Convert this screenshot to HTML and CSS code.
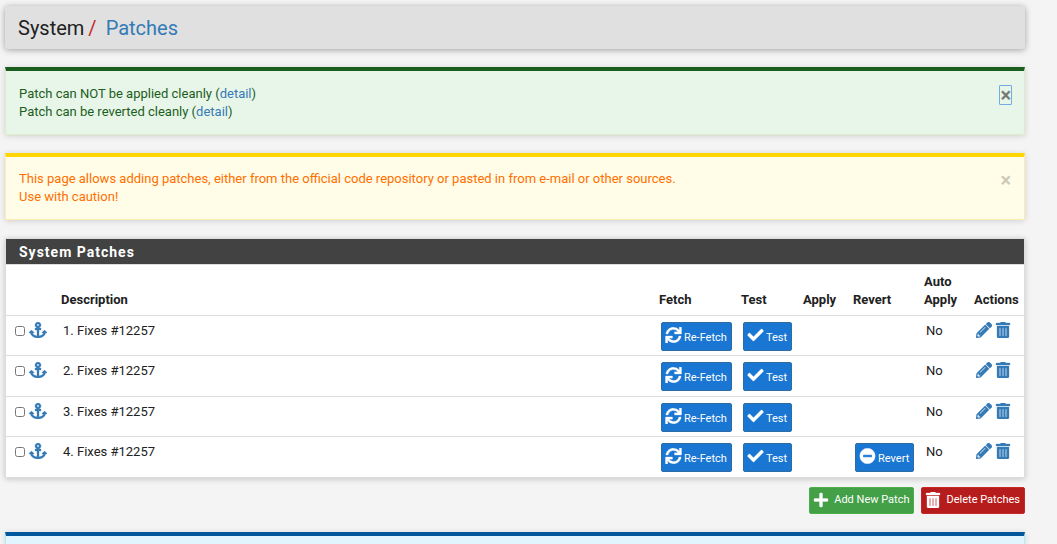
FILE: index.html
```
<!DOCTYPE html>
<html lang="en">
<head>
<meta charset="utf-8">
<title>System / Patches</title>
<link rel="stylesheet" href="styles.css">
</head>
<body>
<svg class="sprite" aria-hidden="true">
  <symbol id="anchor" viewBox="0 0 576 512"><path d="M12.971 352h32.394C67.172 454.735 181.944 512 288 512c106.229 0 220.853-57.38 242.635-160h32.394c10.691 0 16.045-12.926 8.485-20.485l-67.029-67.029c-4.686-4.686-12.284-4.686-16.971 0l-67.029 67.029c-7.56 7.56-2.206 20.485 8.485 20.485h35.146c-20.29 54.317-84.963 86.588-144.117 94.015V256h52c6.627 0 12-5.373 12-12v-40c0-6.627-5.373-12-12-12h-52v-5.47c37.281-13.226 64-48.793 64-90.53C384 43.05 341.057.09 288.155 0 234.964-.09 192 42.98 192 96c0 41.737 26.718 77.304 64 90.53V192h-52c-6.627 0-12 5.373-12 12v40c0 6.627 5.373 12 12 12h52v190.015c-58.936-7.399-123.82-39.679-144.117-94.015h35.146c10.691 0 16.046-12.926 8.485-20.485l-67.029-67.029c-4.686-4.686-12.284-4.686-16.971 0L4.485 331.515C-3.074 339.074 2.28 352 12.971 352zM288 64c17.645 0 32 14.355 32 32s-14.355 32-32 32-32-14.355-32-32 14.355-32 32-32z"/></symbol>
  <symbol id="sync" viewBox="0 0 512 512"><path d="M440.65 12.57l4 82.77A247.16 247.16 0 0 0 255.83 8C134.73 8 33.91 94.92 12.29 209.82A12 12 0 0 0 24.09 224h49.05a12 12 0 0 0 11.67-9.26 175.91 175.91 0 0 1 317-56.94l-101.46-4.86a12 12 0 0 0-12.57 12v47.41a12 12 0 0 0 12 12H500a12 12 0 0 0 12-12V12a12 12 0 0 0-12-12h-47.37a12 12 0 0 0-11.98 12.57zM255.83 432a175.61 175.61 0 0 1-146-77.8l101.8 4.87a12 12 0 0 0 12.57-12v-47.4a12 12 0 0 0-12-12H12a12 12 0 0 0-12 12V500a12 12 0 0 0 12 12h47.35a12 12 0 0 0 12-12.6l-4.15-82.57A247.17 247.17 0 0 0 255.83 504c121.11 0 221.93-86.92 243.55-201.82a12 12 0 0 0-11.8-14.18h-49.05a12 12 0 0 0-11.67 9.26A175.86 175.86 0 0 1 255.83 432z"/></symbol>
  <symbol id="check" viewBox="0 0 512 512"><path d="M173.898 439.404l-166.4-166.4c-9.997-9.997-9.997-26.206 0-36.204l36.203-36.204c9.997-9.998 26.207-9.998 36.204 0L192 312.69 432.095 72.596c9.997-9.997 26.207-9.997 36.204 0l36.203 36.204c9.997 9.997 9.997 26.206 0 36.204l-294.4 294.401c-9.998 9.997-26.207 9.997-36.204-.001z"/></symbol>
  <symbol id="minus" viewBox="0 0 512 512"><path fill-rule="evenodd" d="M256 8a248 248 0 1 0 0 496a248 248 0 1 0 0-496zM124 296c-6.600 0-12-5.400-12-12v-56c0-6.600 5.400-12 12-12h264c6.600 0 12 5.400 12 12v56c0 6.600-5.400 12-12 12z"/></symbol>
  <symbol id="pencil" viewBox="0 0 512 512"><path d="M497.9 142.1l-46.1 46.1c-4.7 4.7-12.3 4.7-17 0l-111-111c-4.7-4.7-4.7-12.3 0-17l46.1-46.1c18.7-18.7 49.1-18.7 67.9 0l60.1 60.1c18.8 18.7 18.8 49.1 0 67.9zM284.2 99.8L21.6 362.4.4 483.9c-2.9 16.4 11.4 30.6 27.8 27.8l121.5-21.3 262.6-262.6c4.7-4.7 4.7-12.3 0-17l-111-111c-4.8-4.7-12.4-4.7-17.1 0zM124.1 339.9c-5.5-5.5-5.5-14.3 0-19.8l154-154c5.5-5.5 14.3-5.5 19.8 0s5.500 14.300 0 19.800l-154 154c-5.500 5.500-14.300 5.500-19.800 0zM88 424h48v36.300l-64.500 11.300-31.100-31.100L51.700 376H88v48z"/></symbol>
  <symbol id="trash" viewBox="0 0 448 512"><path d="M32 464a48 48 0 0 0 48 48h288a48 48 0 0 0 48-48V128H32zm272-256a16 16 0 0 1 32 0v224a16 16 0 0 1-32 0zm-96 0a16 16 0 0 1 32 0v224a16 16 0 0 1-32 0zm-96 0a16 16 0 0 1 32 0v224a16 16 0 0 1-32 0zM432 32H312l-9.4-18.7A24 24 0 0 0 281.1 0H166.8a23.72 23.72 0 0 0-21.4 13.3L136 32H16A16 16 0 0 0 0 48v32a16 16 0 0 0 16 16h416a16 16 0 0 0 16-16V48a16 16 0 0 0-16-16z"/></symbol>
  <symbol id="plus" viewBox="0 0 448 512"><path d="M416 208H272V64c0-17.67-14.33-32-32-32h-32c-17.67 0-32 14.33-32 32v144H32c-17.67 0-32 14.33-32 32v32c0 17.67 14.33 32 32 32h144v144c0 17.67 14.33 32 32 32h32c17.67 0 32-14.33 32-32V304h144c17.67 0 32-14.33 32-32v-32c0-17.67-14.33-32-32-32z"/></symbol>
</svg>
<main class="container">
  <header class="page-header">
    <h1 class="page-title">System<span class="slash">/</span><a href="#">Patches</a></h1>
  </header>

  <div class="alert alert-success" role="alert">
    <div>Patch can NOT be applied cleanly (<a href="#">detail</a>)<br>Patch can be reverted cleanly (<a href="#">detail</a>)</div>
    <button type="button" class="close close-active" aria-label="Close">×</button>
  </div>

  <div class="alert alert-warning" role="alert">
    <div>This page allows adding patches, either from the official code repository or pasted in from e-mail or other sources.<br>Use with caution!</div>
    <button type="button" class="close" aria-label="Close">×</button>
  </div>

  <section class="panel">
    <h2 class="panel-heading">System Patches</h2>
    <table class="patches">
      <colgroup>
        <col class="col-select"><col><col class="col-fetch"><col class="col-test"><col class="col-apply"><col class="col-revert"><col class="col-auto"><col class="col-actions">
      </colgroup>
      <thead>
        <tr><th></th><th>Description</th><th>Fetch</th><th>Test</th><th>Apply</th><th>Revert</th><th>Auto Apply</th><th>Actions</th></tr>
      </thead>
      <tbody>
        <tr>
          <td><div class="select"><input type="checkbox" aria-label="Select patch 1"><a href="#" aria-label="Move patch 1"><svg class="icon icon-wide"><use href="#anchor"/></svg></a></div></td>
          <td>1. Fixes #12257</td>
          <td><button type="button" class="btn btn-row"><svg class="icon"><use href="#sync"/></svg><span>Re-Fetch</span></button></td>
          <td><button type="button" class="btn btn-row"><svg class="icon"><use href="#check"/></svg><span>Test</span></button></td>
          <td></td><td></td><td>No</td>
          <td><div class="actions"><a href="#" aria-label="Edit patch 1"><svg class="icon"><use href="#pencil"/></svg></a><a href="#" aria-label="Delete patch 1"><svg class="icon"><use href="#trash"/></svg></a></div></td>
        </tr>
        <tr>
          <td><div class="select"><input type="checkbox" aria-label="Select patch 2"><a href="#" aria-label="Move patch 2"><svg class="icon icon-wide"><use href="#anchor"/></svg></a></div></td>
          <td>2. Fixes #12257</td>
          <td><button type="button" class="btn btn-row"><svg class="icon"><use href="#sync"/></svg><span>Re-Fetch</span></button></td>
          <td><button type="button" class="btn btn-row"><svg class="icon"><use href="#check"/></svg><span>Test</span></button></td>
          <td></td><td></td><td>No</td>
          <td><div class="actions"><a href="#" aria-label="Edit patch 2"><svg class="icon"><use href="#pencil"/></svg></a><a href="#" aria-label="Delete patch 2"><svg class="icon"><use href="#trash"/></svg></a></div></td>
        </tr>
        <tr>
          <td><div class="select"><input type="checkbox" aria-label="Select patch 3"><a href="#" aria-label="Move patch 3"><svg class="icon icon-wide"><use href="#anchor"/></svg></a></div></td>
          <td>3. Fixes #12257</td>
          <td><button type="button" class="btn btn-row"><svg class="icon"><use href="#sync"/></svg><span>Re-Fetch</span></button></td>
          <td><button type="button" class="btn btn-row"><svg class="icon"><use href="#check"/></svg><span>Test</span></button></td>
          <td></td><td></td><td>No</td>
          <td><div class="actions"><a href="#" aria-label="Edit patch 3"><svg class="icon"><use href="#pencil"/></svg></a><a href="#" aria-label="Delete patch 3"><svg class="icon"><use href="#trash"/></svg></a></div></td>
        </tr>
        <tr>
          <td><div class="select"><input type="checkbox" aria-label="Select patch 4"><a href="#" aria-label="Move patch 4"><svg class="icon icon-wide"><use href="#anchor"/></svg></a></div></td>
          <td>4. Fixes #12257</td>
          <td><button type="button" class="btn btn-row"><svg class="icon"><use href="#sync"/></svg><span>Re-Fetch</span></button></td>
          <td><button type="button" class="btn btn-row"><svg class="icon"><use href="#check"/></svg><span>Test</span></button></td>
          <td></td>
          <td><button type="button" class="btn btn-row"><svg class="icon"><use href="#minus"/></svg><span>Revert</span></button></td>
          <td>No</td>
          <td><div class="actions"><a href="#" aria-label="Edit patch 4"><svg class="icon"><use href="#pencil"/></svg></a><a href="#" aria-label="Delete patch 4"><svg class="icon"><use href="#trash"/></svg></a></div></td>
        </tr>
      </tbody>
    </table>
  </section>

  <nav class="action-buttons">
    <button type="button" class="btn btn-add"><svg class="icon"><use href="#plus"/></svg><span>Add New Patch</span></button>
    <button type="button" class="btn btn-delete"><svg class="icon"><use href="#trash"/></svg><span>Delete Patches</span></button>
  </nav>

  <div class="alert alert-info"></div>
</main>
</body>
</html>
```
FILE: styles.css
```
* { box-sizing: border-box; }

body {
  margin: 0;
  background: #f4f4f4;
  color: #212121;
  font: 13px/18px Roboto, "Liberation Sans", sans-serif;
}

a { color: #337ab7; text-decoration: none; }

.sprite { display: none; }

.icon { display: block; flex: none; width: 16px; height: 16px; fill: currentColor; stroke: currentColor; stroke-width: 10px; }
.icon-wide { width: 18px; }

.container {
  display: flex;
  flex-direction: column;
  min-height: 100vh;
  padding: 6px 32px 0 5px;
}

.page-header {
  margin-bottom: 18px;
  padding: 10px 13px 9px;
  border-radius: 3px;
  background: #e0e0e0;
  box-shadow: 0 1px 6px rgba(0, 0, 0, 0.35);
}

.page-title { margin: 0; font-size: 20px; line-height: 24px; font-weight: 400; }
.slash { margin: 0 9px 0 4px; color: #c62828; }

.alert {
  display: flex;
  justify-content: space-between;
  align-items: flex-start;
  min-height: 67px;
  margin-bottom: 18px;
  padding: 13px 12px 12px 13px;
  border: 1px solid;
  border-top-width: 4px;
  box-shadow: 0 1px 6px rgba(0, 0, 0, 0.15);
}

.alert-success { min-height: 68px; padding-top: 14px; background: #e8f5e9; color: #1b5e20; border-color: #1b5e20 #dcedc8 #dcedc8; }
.alert-warning { background: #fffde7; color: #ff6f00; border-color: #ffd600 #ffecb3 #ffecb3; }
.alert-info {
  flex: 1;
  min-height: 12px;
  margin-bottom: 0;
  padding: 0;
  border-bottom: 0;
  background: #e1f5fe;
  border-color: #01579b #b2ebf2;
}

.close {
  padding: 0;
  border: 1px solid transparent;
  border-radius: 1px;
  background: none;
  color: #000;
  font: 700 20px/18px Roboto, "Liberation Sans", sans-serif;
  opacity: 0.2;
}
.close-active { border-color: #0060e0; opacity: 0.5; }

.panel {
  margin-bottom: 9px;
  border: 1px solid #ddd;
  background: #fff;
  box-shadow: 0 1px 6px rgba(0, 0, 0, 0.2);
}

.panel-heading {
  margin: 0;
  padding: 4px 13px 3px;
  border-bottom: 1px solid #ddd;
  background: #424242;
  color: #fff;
  font-size: 14px;
  line-height: 18px;
  letter-spacing: 1px;
}

.patches { width: 100%; table-layout: fixed; border-collapse: collapse; }
.col-select { width: 51px; }
.col-fetch { width: 82px; }
.col-test { width: 62px; }
.col-apply { width: 50px; }
.col-revert { width: 71px; }
.col-auto { width: 50px; }
.col-actions { width: 54px; }

.patches th { height: 50px; padding: 8px 4px 6px; text-align: left; vertical-align: bottom; }
.patches td { height: 40px; padding: 6px 6px 4px; border-top: 1px solid #ddd; vertical-align: top; }
.patches tr:nth-child(2) td { height: 41px; }

.select { display: flex; align-items: center; gap: 4px; padding-left: 3px; }
.select input { width: 10px; height: 10px; margin: 2px 0 0; }

.actions { display: flex; gap: 3px; }

.btn {
  display: flex;
  align-items: center;
  border: 1px solid;
  border-radius: 2px;
  color: #fff;
  font: 11px/18px Roboto, "Liberation Sans", sans-serif;
  white-space: nowrap;
}

.btn-row { gap: 2px; height: 29px; padding: 0 4px 0 3px; background: #1976d2; border-color: #2e6da4; }
.btn-row .icon { width: 17px; margin-bottom: 3px; }
.btn-row span { padding-top: 3px; }

.action-buttons { display: flex; justify-content: flex-end; gap: 7px; margin-bottom: 18px; }
.btn-add, .btn-delete { gap: 5px; height: 27px; padding: 0 4px 0 3px; }
.btn-add { background: #43a047; border-color: #4cae4c; }
.btn-delete { background: #b71c1c; border-color: #c62828; }
```
